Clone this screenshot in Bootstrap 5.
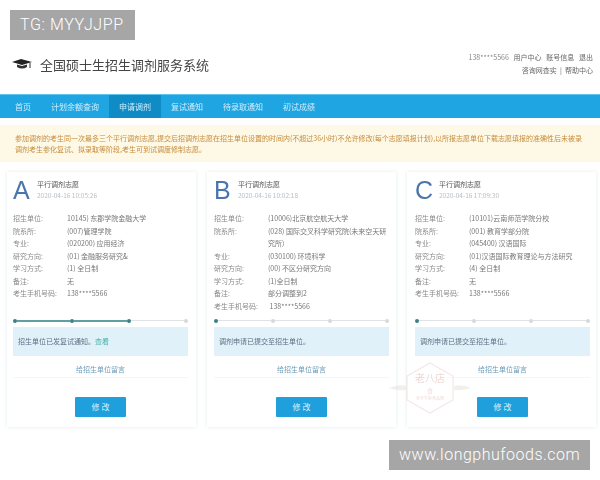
<!doctype html>
<html lang="zh-CN">
<head>
<meta charset="utf-8" />
<meta name="viewport" content="width=device-width, initial-scale=1" />
<title>全国硕士生招生调剂服务系统</title>
<link href="https://cdn.jsdelivr.net/npm/bootstrap@5.3.5/dist/css/bootstrap.min.css" rel="stylesheet" />
<style>
    body {
        width: 600px;
        height: 480px;
        overflow: hidden;
        background: #fff;
        font-family: "Noto Sans CJK SC", "Liberation Sans", sans-serif;
        font-size: 7px;
        color: #666;
    }
    .fuzzy { filter: blur(0.7px); }
    .soft { filter: blur(0.45px); }

    .tag-box {
        position: absolute;
        background: #a6a6a6;
        color: #fff;
        font-family: Roboto, "Liberation Sans", sans-serif;
        font-weight: 300;
        font-size: 16px;
        line-height: 30px;
        height: 30px;
        padding: 0 10px;
        z-index: 5;
    }
    .tag-top { left: 10px; top: 10px; width: 125px; letter-spacing: 0.6px; }
    .tag-bottom { left: 389px; top: 440px; width: 201px; letter-spacing: 0.5px; }

    .site-head { height: 94px; padding: 51px 7px 0 12px; }
    .site-logo { margin-top: 7px; }
    .site-title { font-size: 13px; color: #444; margin-left: 8px; line-height: 20px; margin-top: 4px; }
    .head-links { font-size: 7px; line-height: 13px; color: #666; }

    .main-nav { height: 24px; background: #1fa5e2; border-top: 1px solid #5cc6ee; padding-left: 5px; }
    .main-nav span { padding: 0 10px; font-size: 8px; line-height: 23px; color: #cdeefb; }
    .main-nav .nav-on { background: #0f8cc6; }

    .notice-box {
        margin: 7px 0 10px;
        height: 37px;
        padding: 8px 15px;
        background: #fdf9e6;
        color: #c88b3c;
        font-size: 7px;
        line-height: 10.5px;
    }

    .card-row { padding: 0 4px 0 7px; gap: 11px; }
    .pick-card {
        width: 189px;
        height: 255px;
        padding: 8px 8px 0 6px;
        background: #fff;
        box-shadow: 0 0 4px rgba(120, 150, 170, 0.2);
    }
    .pick-card:nth-child(2) { padding: 8px 7px 0 7px; }
    .pick-card:nth-child(3) { padding: 8px 6px 0 8px; }
    .pick-head { margin-top: -1px; }
    .pick-letter { font-size: 25px; line-height: 22px; width: 20px; color: #4a76ad; font-family: "Liberation Sans", sans-serif; }
    .pick-title { font-size: 7px; line-height: 10px; color: #555; }
    .pick-date { font-size: 6.5px; line-height: 12px; color: #b5c0c8; }

    .info-block { height: 106px; margin-top: 11px; }
    .info-line { line-height: 12.5px; }
    .info-key { width: 54px; flex: none; color: #8a8a8a; }
    .info-val { color: #777; }

    .step-line { height: 5px; }
    .step-dot { width: 4px; height: 4px; border-radius: 50%; background: #d5d9d8; flex: none; }
    .step-dot.on { background: #3d7f84; }
    .step-seg { height: 1px; flex: 1; background: #dfe3e2; }
    .step-seg.on { height: 2px; background: #5f9fa4; }

    .msg-box {
        margin-top: 4px;
        height: 29px;
        padding: 0 5px;
        background: #e1f1fa;
        color: #5b7080;
        line-height: 29px;
    }
    .msg-box b { color: #45b3a8; font-weight: 400; }

    .unit-link {
        color: #6d9cba;
        line-height: 12px;
        margin-top: 7px;
        padding-bottom: 2px;
        border-bottom: 1px solid #f6f6f6;
        text-align: center;
    }
    .edit-btn {
        display: block;
        width: 51px;
        height: 20px;
        margin: 19px auto 0;
        padding: 0;
        border: 0;
        border-radius: 1px;
        background: #1fa0dc;
        color: #d8f1fb;
        font-size: 8px;
        line-height: 20px;
    }
    .stamp-mark { position: absolute; left: 388px; top: 362px; width: 84px; height: 52px; opacity: 0.45; z-index: 2; }
    .stamp-mark text { font-family: "Noto Sans CJK SC", sans-serif; fill: #dba9a5; }
</style>
</head>
<body>
    <div class="tag-box tag-top text-nowrap">TG: MYYJJPP</div>

    <div class="site-head d-flex justify-content-between">
        <div class="d-flex align-items-start">
            <svg width="20" height="13" viewBox="0 0 20 13" class="site-logo soft">
                <path d="M0 4 L9 1 L20 4 L10 7 Z" fill="#222" />
                <path d="M5 6.5 L5 9 Q10 12 15 9 L15 6.5 L10 8 Z" fill="#333" />
                <path d="M18 5 L18 10" stroke="#333" stroke-width="1" />
            </svg>
            <div class="site-title soft">全国硕士生招生调剂服务系统</div>
        </div>
        <div class="head-links text-end fuzzy">
            <div><span class="text-black-50">138****5566</span>&nbsp;&nbsp; 用户中心 &nbsp;&nbsp;账号信息 &nbsp;&nbsp;退出</div>
            <div>咨询网查实 &nbsp;|&nbsp; 帮助中心</div>
        </div>
    </div>

    <div class="main-nav d-flex">
        <span class="fuzzy">首页</span>
        <span class="fuzzy">计划余额查询</span>
        <span class="nav-on"><span class="fuzzy d-block p-0">申请调剂</span></span>
        <span class="fuzzy">复试通知</span>
        <span class="fuzzy">待录取通知</span>
        <span class="fuzzy">初试成绩</span>
    </div>

    <div class="notice-box"><div class="fuzzy">参加调剂的考生同一次最多三个平行调剂志愿,提交后招调剂志愿在招生单位设置的时间内(不超过36小时)不允许修改(每个志愿填报计划),以所报志愿单位下载志愿填报的准确性后未被录<br />调剂考生参化复试、拟录取等阶段,考生可到试调度修制志愿。</div></div>

    <div class="card-row d-flex">
        <div class="pick-card">
            <div class="pick-head d-flex soft">
                <div class="pick-letter">A</div>
                <div class="ms-1">
                    <div class="pick-title">平行调剂志愿</div>
                    <div class="pick-date fuzzy">2020-04-16 10:05:26</div>
                </div>
            </div>
            <div class="info-block fuzzy">
                <div class="info-line d-flex"><div class="info-key">招生单位:</div><div class="info-val">10145) 东郡学院金融大学</div></div>
                <div class="info-line d-flex"><div class="info-key">院系所:</div><div class="info-val">(007)管理学院</div></div>
                <div class="info-line d-flex"><div class="info-key">专业:</div><div class="info-val">(020200) 应用经济</div></div>
                <div class="info-line d-flex"><div class="info-key">研究方向:</div><div class="info-val">(01) 金融服务研究&amp;</div></div>
                <div class="info-line d-flex"><div class="info-key">学习方式:</div><div class="info-val">(1) 全日制</div></div>
                <div class="info-line d-flex"><div class="info-key">备注:</div><div class="info-val">无</div></div>
                <div class="info-line d-flex"><div class="info-key">考生手机号码:</div><div class="info-val">138****5566</div></div>
            </div>
            <div class="step-line d-flex align-items-center">
                <i class="step-dot on"></i><i class="step-seg on"></i><i class="step-dot on"></i><i class="step-seg on"></i><i class="step-dot on"></i><i class="step-seg"></i><i class="step-dot"></i>
            </div>
            <div class="msg-box"><div class="fuzzy">招生单位已发复试通知。<b>查看</b></div></div>
            <div class="unit-link"><span class="fuzzy d-block">给招生单位留言</span></div>
            <button class="edit-btn" type="button">修 改</button>
        </div>

        <div class="pick-card">
            <div class="pick-head d-flex soft">
                <div class="pick-letter">B</div>
                <div class="ms-1">
                    <div class="pick-title">平行调剂志愿</div>
                    <div class="pick-date fuzzy">2020-04-16 10:02:18</div>
                </div>
            </div>
            <div class="info-block fuzzy">
                <div class="info-line d-flex"><div class="info-key">招生单位:</div><div class="info-val">(10006)北京航空航天大学</div></div>
                <div class="info-line d-flex"><div class="info-key">院系所:</div><div class="info-val">(028) 国际交叉科学研究院(未来空天研究所)</div></div>
                <div class="info-line d-flex"><div class="info-key">专业:</div><div class="info-val">(030100) 环境科学</div></div>
                <div class="info-line d-flex"><div class="info-key">研究方向:</div><div class="info-val">(00) 不区分研究方向</div></div>
                <div class="info-line d-flex"><div class="info-key">学习方式:</div><div class="info-val">(1)全日制</div></div>
                <div class="info-line d-flex"><div class="info-key">备注:</div><div class="info-val">部分调整到2</div></div>
                <div class="info-line d-flex"><div class="info-key">考生手机号码:</div><div class="info-val">&nbsp;138****5566</div></div>
            </div>
            <div class="step-line d-flex align-items-center">
                <i class="step-dot on"></i><i class="step-seg"></i><i class="step-dot"></i><i class="step-seg"></i><i class="step-dot"></i><i class="step-seg"></i><i class="step-dot"></i>
            </div>
            <div class="msg-box"><div class="fuzzy">调剂申请已提交至招生单位。</div></div>
            <div class="unit-link"><span class="fuzzy d-block">给招生单位留言</span></div>
            <button class="edit-btn" type="button">修 改</button>
        </div>

        <div class="pick-card">
            <div class="pick-head d-flex soft">
                <div class="pick-letter">C</div>
                <div class="ms-1">
                    <div class="pick-title">平行调剂志愿</div>
                    <div class="pick-date fuzzy">2020-04-16 17:09:30</div>
                </div>
            </div>
            <div class="info-block fuzzy">
                <div class="info-line d-flex"><div class="info-key">招生单位:</div><div class="info-val">(10101)云南师范学院分校</div></div>
                <div class="info-line d-flex"><div class="info-key">院系所:</div><div class="info-val">(001) 教育学部分院</div></div>
                <div class="info-line d-flex"><div class="info-key">专业:</div><div class="info-val">(045400) 汉语国际</div></div>
                <div class="info-line d-flex"><div class="info-key">研究方向:</div><div class="info-val">(01)汉语国际教育理论与方法研究</div></div>
                <div class="info-line d-flex"><div class="info-key">学习方式:</div><div class="info-val">(4) 全日制</div></div>
                <div class="info-line d-flex"><div class="info-key">备注:</div><div class="info-val">无</div></div>
                <div class="info-line d-flex"><div class="info-key">考生手机号码:</div><div class="info-val">138****5566</div></div>
            </div>
            <div class="step-line d-flex align-items-center">
                <i class="step-dot on"></i><i class="step-seg"></i><i class="step-dot"></i><i class="step-seg"></i><i class="step-dot"></i><i class="step-seg"></i><i class="step-dot"></i>
            </div>
            <div class="msg-box"><div class="fuzzy">调剂申请已提交至招生单位。</div></div>
            <div class="unit-link"><span class="fuzzy d-block">给招生单位留言</span></div>
            <button class="edit-btn" type="button">修 改</button>
        </div>
    </div>

    <svg class="stamp-mark fuzzy" viewBox="0 0 84 52">
        <path d="M42 1 L65 14 L65 38 L42 51 L19 38 L19 14 Z" fill="#fff" fill-opacity="0.6" stroke="#e8c9c6" stroke-width="1.2" />
        <path d="M1 26 Q10 22 18 24 L18 28 Q10 29 1 26 Z M83 26 Q74 22 66 24 L66 28 Q74 29 83 26 Z" fill="#e6dcd8" />
        <text x="42" y="20" font-size="10" text-anchor="middle">老八店</text>
        <text x="42" y="31" font-size="6" text-anchor="middle">食</text>
        <text x="42" y="38" font-size="4" text-anchor="middle">老字号美食品牌</text>
    </svg>

    <div class="tag-box tag-bottom">www.longphufoods.com</div>

    <script src="https://cdn.jsdelivr.net/npm/bootstrap@5.3.5/dist/js/bootstrap.bundle.min.js"></script>
</body>
</html>
